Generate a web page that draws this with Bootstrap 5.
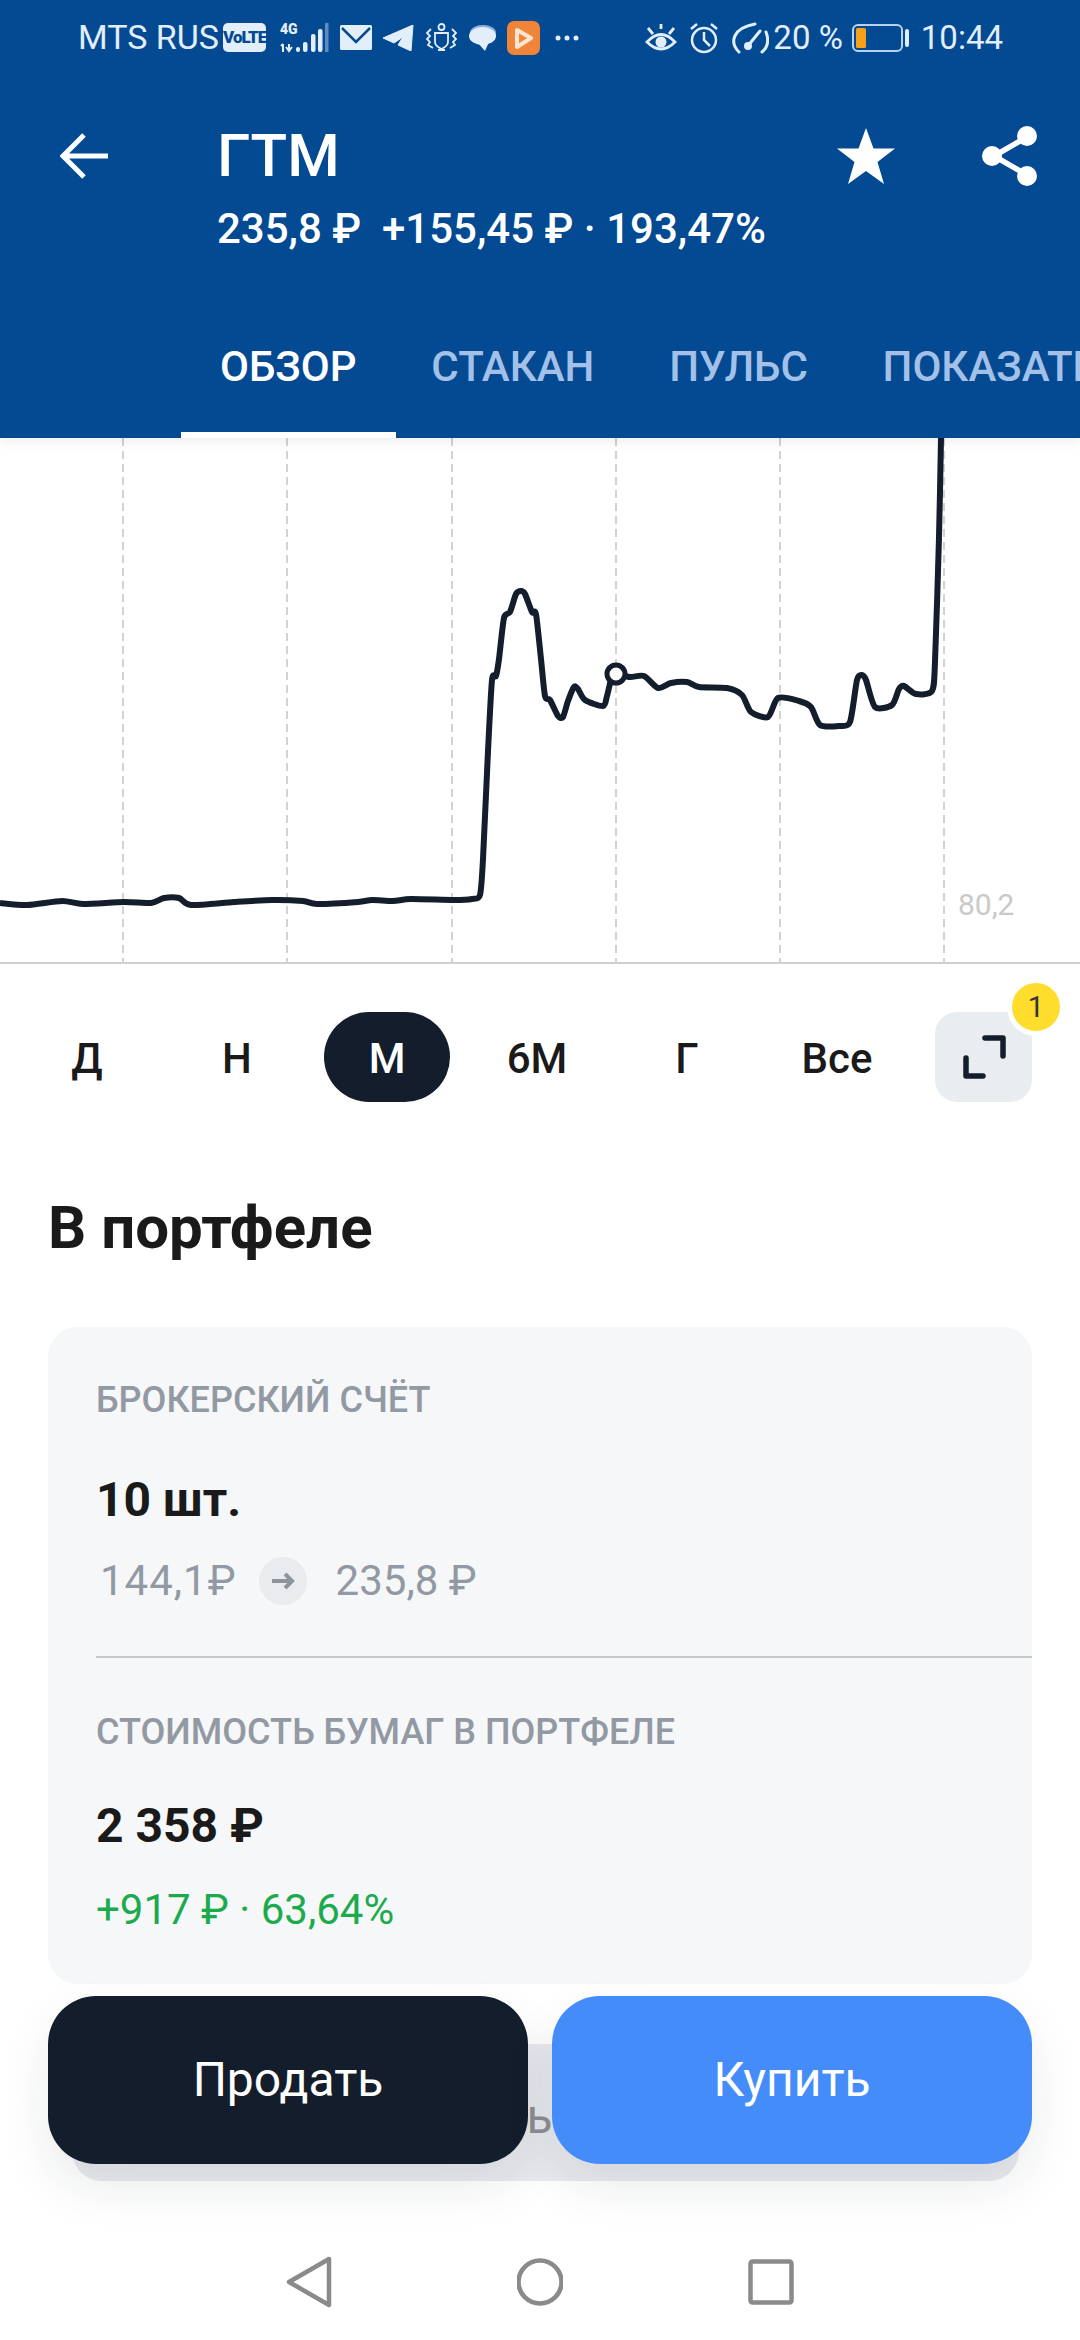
<!DOCTYPE html>
<html lang="ru">
<head>
    <meta charset="UTF-8">
    <meta name="viewport" content="width=device-width, initial-scale=1.0">
    <title>ГТМ</title>
    <link href="https://cdn.jsdelivr.net/npm/bootstrap@5.3.3/dist/css/bootstrap.min.css" rel="stylesheet">
    <style>
        html, body { margin: 0; padding: 0; background: #fff; }
        body { font-family: Roboto, "Noto Sans", sans-serif; color: #1a1a1a; }

        .screen { position: relative; width: 1080px; height: 2340px; overflow: hidden; background: #fff; }

        /* Шапка */
        .top-head { position: relative; z-index: 2; background: #034a93; color: #fff; box-shadow: 0 3px 12px rgba(0, 0, 0, .08); }

        .status-row { height: 75px; padding: 0 77px 0 78px; color: #e3eefb; font-size: 34px; line-height: 75px; }
        .status-left { gap: 11px; }
        .status-right { gap: 12px; font-size: 33px; }
        .status-row svg { display: block; flex: none; }
        .volte-box { margin: 0 3px 0 -7px; width: 43px; height: 29px; border-radius: 5px; background: #e3eefb; color: #034a93; font-size: 17px; font-weight: 900; line-height: 29px; letter-spacing: -1px; text-align: center; }
        .gauge-icon { margin-right: -8px; }
        .battery-icon { margin-left: -3px; }

        .title-row { padding: 46px 42px 30px 60px; }
        .back-slot { width: 157px; height: 70px; }
        .stock-name { font-size: 60px; font-weight: 500; line-height: 70px; }
        .stock-sub { font-size: 42px; font-weight: 500; line-height: 75px; white-space: pre; }
        .head-actions { gap: 87px; height: 70px; }

        .tab-strip { height: 142px; padding-left: 181px; overflow: hidden; }
        .tab-link { height: 142px; padding: 0 37.4px; border-bottom: 6px solid transparent; color: #a3c1e8; font-size: 42px; font-weight: 500; line-height: 142px; white-space: nowrap; }
        .tab-link.active { margin-right: -1.6px; padding: 0 39px; }
        .tab-link.active, .tab-link:hover { color: #fff; border-bottom-color: #fff; }

        /* График */
        .chart-box { display: block; }
        .chart-note { font-family: Roboto, sans-serif; font-size: 30px; fill: #c9c9c9; }

        /* Периоды */
        .period-row { margin-top: 47px; padding-left: 12px; }
        .period-btn { width: 126px; height: 90px; margin: 0 12px; padding: 3px 0 0; border: 0; border-radius: 45px; color: #1a1a1a; font-size: 42px; font-weight: 500; line-height: 87px; }
        .period-btn.active { background: #141d2b; color: #fff; }
        .expand-btn { position: relative; width: 97px; height: 90px; margin-left: 23px; padding: 0; border: 0; border-radius: 22px; background: #eaedef; }
        .count-dot { position: absolute; top: -34px; right: -33px; width: 58px; height: 58px; border: 5px solid #fff; border-radius: 50%; background: #ffdd2d; color: #333; font-size: 29px; font-weight: 400; line-height: 48px; text-align: center; }

        /* Портфель */
        .section-title { margin: 90px 0 63px 48px; font-size: 60px; font-weight: 700; line-height: 72px; }
        .stock-panel { margin: 0 48px; padding: 51px 0 50px 48px; border-radius: 30px; background: #f5f7f9; }
        .panel-label { color: #9299a2; font-size: 36px; font-weight: 500; line-height: 44px; }
        .panel-value { font-size: 48px; font-weight: 700; line-height: 56px; }
        .qty-value { margin-top: 50px; }
        .cost-value { margin-top: 44px; }
        .panel-line { font-size: 42px; line-height: 48px; }
        .muted-price { margin-top: 29px; padding-left: 4px; gap: 22px; color: #9299a2; }
        .price-was { letter-spacing: 1px; }
        .price-now { margin-left: 7px; }
        .arrow-dot { width: 48px; height: 48px; border-radius: 50%; background: #e9ebee; }
        .panel-rule { height: 2px; margin: 51px 0 52px; background: #c6c9cc; border: 0; opacity: 1; }
        .gain-text { margin-top: 32px; color: #1cab4c; }

        .under-block { margin: 60px 61px 0 72px; height: 137px; padding: 43px 38px 0 0; border-radius: 0 0 30px 30px; background: #e8eaed; color: #8d8f94; font-size: 48px; line-height: 60px; text-align: center; }

        /* Кнопки поверх контента */
        .deal-bar { position: absolute; left: 48px; right: 48px; bottom: 176px; gap: 24px; z-index: 3; }
        .deal-btn { flex: 1 1 0; height: 168px; border: 0; border-radius: 48px; color: #fff; font-size: 48px; box-shadow: 0 22px 50px rgba(20, 29, 43, .09); }
        .deal-btn:hover { color: #fff; }
        .sell-btn { background: #141d2b; }
        .buy-btn { background: #448cfa; }

        /* Навигация Android */
        .sys-nav { position: absolute; left: 0; right: 0; bottom: 0; height: 116px; gap: 185px; z-index: 2; }
    </style>
</head>
<body>
    <div class="screen">
        <header class="top-head">
            <div class="status-row d-flex justify-content-between align-items-center">
                <div class="status-left d-flex align-items-center">
                    <span>MTS RUS</span>
                    <span class="volte-box">VoLTE</span>
                    <svg width="49" height="32" viewBox="0 0 49 32">
                        <text x="0" y="12" font-size="14" font-weight="900" fill="#e3eefb" font-family="Roboto, sans-serif">4G</text>
                        <path d="M3 22v8M1 24l2-2M9 22v7M6 25l3 4 3-4" fill="none" stroke="#e3eefb" stroke-width="2"/>
                        <rect x="16" y="25" width="4" height="5" rx="2" fill="#e3eefb"/>
                        <rect x="23" y="20" width="4.500" height="10" rx="2" fill="#e3eefb"/>
                        <rect x="31" y="12" width="4.500" height="18" rx="2" fill="#e3eefb"/>
                        <rect x="38" y="7" width="4.500" height="23" rx="2" fill="#e3eefb"/>
                        <rect x="45" y="1" width="3.500" height="29" fill="#e3eefb" opacity=".4"/>
                    </svg>
                    <svg width="32" height="25" viewBox="0 0 32 25">
                        <rect width="32" height="25" rx="1.500" fill="#e3eefb"/>
                        <path d="M2 3l14 14L30 3" fill="none" stroke="#034a93" stroke-width="2.500"/>
                    </svg>
                    <svg width="31" height="26" viewBox="0 0 31 26">
                        <path d="M30 0L0 13l11 5 9-6-5 8 13 6z" fill="#e3eefb" stroke="#e3eefb" stroke-linejoin="round"/>
                    </svg>
                    <svg width="33" height="30" viewBox="0 0 33 30" fill="none" stroke="#e3eefb" stroke-width="1.800">
                        <circle cx="16.500" cy="4" r="3"/>
                        <path d="M10 10h13v9q0 4-6.500 7q-6.500-3-6.500-7zM13 27h7M6 6L2 10l3 3-3 3 3 3-2 3 5 3M27 6l4 4-3 3 3 3-3 3 2 3-5 3"/>
                    </svg>
                    <svg width="27" height="26" viewBox="0 0 27 26">
                        <ellipse cx="14" cy="8" rx="13" ry="8" fill="#8fb3dc"/>
                        <ellipse cx="13.500" cy="11" rx="13.500" ry="9" fill="#e3eefb"/>
                        <path d="M8 17l8 9 4-9z" fill="#e3eefb"/>
                    </svg>
                    <svg width="33" height="34" viewBox="0 0 33 34">
                        <rect width="33" height="34" rx="7" fill="#f0853a"/>
                        <path d="M10 9l14 8-14 9z" fill="none" stroke="#fce6d3" stroke-width="4" stroke-linejoin="round"/>
                    </svg>
                    <svg class="ms-1" width="24" height="6" viewBox="0 0 24 6" fill="#e3eefb">
                        <circle cx="3" cy="3" r="2.500"/><circle cx="12" cy="3" r="2.500"/><circle cx="21" cy="3" r="2.500"/>
                    </svg>
                </div>
                <div class="status-right d-flex align-items-center">
                    <svg width="32" height="30" viewBox="0 0 32 30" fill="none" stroke="#e3eefb" stroke-width="2.800">
                        <path d="M2 19q14-15 28 0q-14 14-28 0zM3 5l5 6M16 1v5M29 5l-5 6"/>
                        <circle cx="16" cy="19" r="5.500" fill="#e3eefb" stroke="none"/>
                    </svg>
                    <svg width="30" height="32" viewBox="0 0 30 32" fill="none" stroke="#e3eefb" stroke-width="2.500">
                        <circle cx="15" cy="18" r="12"/>
                        <path d="M15 10v8l6 6M2 7l6-5M28 7l-6-5"/>
                    </svg>
                    <svg class="gauge-icon" width="38" height="32" viewBox="0 0 38 32" fill="none" stroke="#e3eefb" stroke-width="3" stroke-linecap="round">
                        <path d="M8 30C-2 20 2 6 24 2M35 10c3 8 2 15-4 20M16 25l13-16"/>
                        <circle cx="17" cy="24" r="2.500" fill="#e3eefb"/>
                    </svg>
                    <span>20 %</span>
                    <svg class="battery-icon" width="57" height="28" viewBox="0 0 57 28">
                        <rect x="1" y="1" width="49" height="26" rx="5" fill="none" stroke="#b8d3f0" stroke-width="2"/>
                        <rect x="4" y="4" width="10" height="20" rx="1.500" fill="#f7a11a"/>
                        <rect x="53" y="5" width="4" height="18" rx="2" fill="#e3eefb"/>
                    </svg>
                    <span>10:44</span>
                </div>
            </div>

            <div class="title-row d-flex align-items-start">
                <div class="back-slot d-flex align-items-center">
                    <svg width="48" height="46" viewBox="0 0 48 46" fill="none" stroke="#fff" stroke-width="5">
                        <path d="M48 23H4M24 2L3 23l21 21"/>
                    </svg>
                </div>
                <div class="flex-grow-1">
                    <div class="stock-name">ГТМ</div>
                    <div class="stock-sub">235,8 ₽  +155,45 ₽ · 193,47%</div>
                </div>
                <div class="head-actions d-flex align-items-center">
                    <svg width="58" height="56" viewBox="0 0 58 56">
                        <path d="M29 0l7.500 20.500H58L40.500 34l6.500 22-18-13-18 13 6.500-22L0 20.500h21.500z" fill="#fff"/>
                    </svg>
                    <svg width="56" height="60" viewBox="0 0 56 60" fill="#fff">
                        <path d="M45 11L12 30l33 19" fill="none" stroke="#fff" stroke-width="5.500"/>
                        <circle cx="45" cy="10" r="10"/><circle cx="10" cy="30" r="10"/><circle cx="45" cy="50" r="10"/>
                    </svg>
                </div>
            </div>

            <nav class="nav flex-nowrap tab-strip">
                <a class="nav-link tab-link active" href="#">ОБЗОР</a>
                <a class="nav-link tab-link" href="#">СТАКАН</a>
                <a class="nav-link tab-link" href="#">ПУЛЬС</a>
                <a class="nav-link tab-link" href="#">ПОКАЗАТЕЛИ</a>
            </nav>
        </header>

        <svg class="chart-box" width="1080" height="527" viewBox="0 438 1080 527">
            <g stroke="#d2d2d2" stroke-width="2" stroke-dasharray="8 5">
                <path d="M123 438V963M287 438V963M452 438V963M616 438V963M780 438V963M944 438V963"/>
            </g>
            <path d="M0 963H1080" stroke="#cfcfcf" stroke-width="2"/>
            <path id="price-line" fill="none" stroke="#141d2b" stroke-width="6" stroke-linejoin="round"/>
            <circle cx="616" cy="674" r="9" fill="#fff" stroke="#141d2b" stroke-width="5"/>
            <text class="chart-note" x="958" y="915">80,2</text>
        </svg>

        <div class="period-row d-flex align-items-center">
            <button class="btn period-btn">Д</button>
            <button class="btn period-btn">Н</button>
            <button class="btn period-btn active">М</button>
            <button class="btn period-btn">6М</button>
            <button class="btn period-btn">Г</button>
            <button class="btn period-btn">Все</button>
            <button class="btn expand-btn d-flex align-items-center justify-content-center">
                <svg width="48" height="44" viewBox="0 0 48 44" fill="none" stroke="#141d2b" stroke-width="5.500" stroke-linecap="round" stroke-linejoin="round">
                    <path d="M25 3H43V21M6 23V41H23"/>
                </svg>
                <span class="count-dot">1</span>
            </button>
        </div>

        <h2 class="section-title">В портфеле</h2>

        <div class="card border-0 stock-panel">
            <div class="panel-label">БРОКЕРСКИЙ СЧЁТ</div>
            <div class="panel-value qty-value">10 шт.</div>
            <div class="panel-line muted-price d-flex align-items-center">
                <span class="price-was">144,1₽</span>
                <span class="arrow-dot d-flex align-items-center justify-content-center">
                    <svg width="24" height="18" viewBox="0 0 24 18" fill="none" stroke="#8d939b" stroke-width="4">
                        <path d="M1 9H21M14 2l7 7-7 7"/>
                    </svg>
                </span>
                <span class="price-now">235,8 ₽</span>
            </div>
            <hr class="panel-rule">
            <div class="panel-label">СТОИМОСТЬ БУМАГ В ПОРТФЕЛЕ</div>
            <div class="panel-value cost-value">2 358 ₽</div>
            <div class="panel-line gain-text">+917 ₽ · 63,64%</div>
        </div>

        <div class="under-block">бь</div>

        <div class="deal-bar d-flex">
            <button class="btn deal-btn sell-btn">Продать</button>
            <button class="btn deal-btn buy-btn">Купить</button>
        </div>

        <div class="sys-nav d-flex align-items-center justify-content-center">
            <svg width="46" height="52" viewBox="0 0 46 52" fill="none" stroke="#8a8a8a" stroke-width="4.500" stroke-linejoin="round">
                <path d="M43 3L3 26l40 23z"/>
            </svg>
            <svg width="46" height="50" viewBox="0 0 46 50" fill="none" stroke="#8a8a8a" stroke-width="4.500">
                <circle cx="23" cy="25" r="21.500"/>
            </svg>
            <svg width="46" height="46" viewBox="0 0 46 46" fill="none" stroke="#8a8a8a" stroke-width="4.500">
                <rect x="2.500" y="2.500" width="41" height="41" rx="2"/>
            </svg>
        </div>
    </div>
    <script src="https://cdn.jsdelivr.net/npm/bootstrap@5.3.3/dist/js/bootstrap.bundle.min.js"></script>
    <script>
        // Точки графика и сглаживание линии
        var pts = [[0,903],[27,905],[62,901],[83,904],[124,902],[151,903],[164,898],[179,898],[191,905],[234,902],[272,900],[303,901],[317,904],[358,902],[372,900],[393,901],[411,899],[454,900],[472,899],[480,895],[483,859],[488,751],[492,680],[496,676],[499,659],[504,618],[510,612],[516,594],[521,591],[525,594],[532,612],[536,614],[541,659],[545,696],[550,700],[558,716],[563,717],[568,701],[574,687],[578,689],[585,700],[603,706],[607,696],[612,676],[616,674],[630,677],[644,676],[658,688],[671,683],[687,682],[699,687],[727,688],[742,695],[751,712],[768,717],[778,698],[799,701],[811,707],[820,725],[839,726],[850,722],[857,680],[862,675],[866,680],[875,707],[892,705],[899,689],[904,686],[916,694],[932,691],[935,662],[939,537],[941,438]];
        var d = 'M' + pts[0][0] + ' ' + pts[0][1];
        for (var i = 0; i < pts.length - 1; i++) {
            var p0 = pts[Math.max(i - 1, 0)], p1 = pts[i], p2 = pts[i + 1], p3 = pts[Math.min(i + 2, pts.length - 1)];
            d += 'C' + (p1[0] + (p2[0] - p0[0]) / 8) + ' ' + (p1[1] + (p2[1] - p0[1]) / 8) + ' '
                + (p2[0] - (p3[0] - p1[0]) / 8) + ' ' + (p2[1] - (p3[1] - p1[1]) / 8) + ' ' + p2[0] + ' ' + p2[1];
        }
        document.getElementById('price-line').setAttribute('d', d);
    </script>
</body>
</html>
